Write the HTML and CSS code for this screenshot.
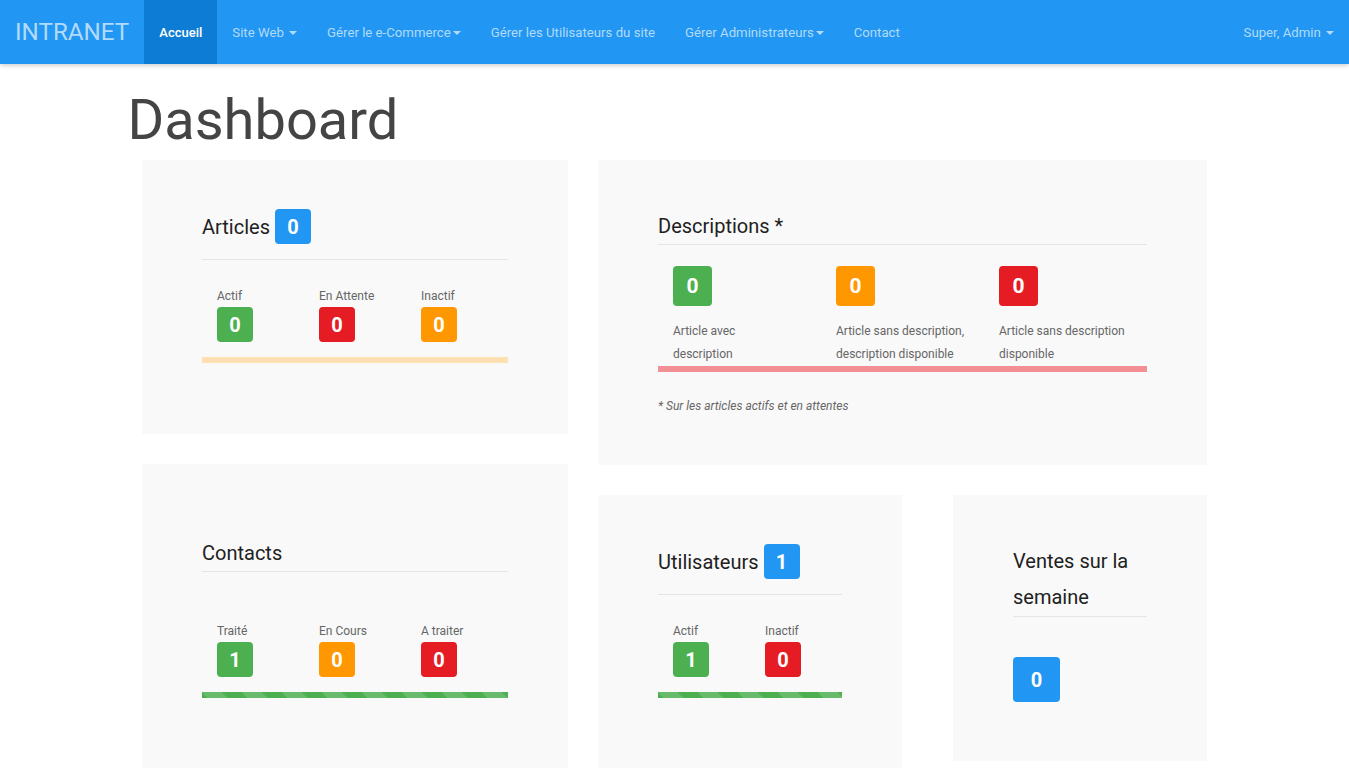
FILE: index.html
```html
<!DOCTYPE html>
<html lang="fr">
<head>
<meta charset="utf-8">
<title>Dashboard - INTRANET</title>
<link rel="stylesheet" href="styles.css">
</head>
<body>
<nav class="navbar">
  <div class="brand">INTRANET</div>
  <ul class="nav">
    <li class="active"><a href="#">Accueil</a></li>
    <li><a href="#">Site Web <span class="caret"></span></a></li>
    <li><a href="#">Gérer le e-Commerce<span class="caret"></span></a></li>
    <li><a href="#">Gérer les Utilisateurs du site</a></li>
    <li><a href="#">Gérer Administrateurs<span class="caret"></span></a></li>
    <li><a href="#">Contact</a></li>
  </ul>
  <ul class="nav nav-right">
    <li><a href="#">Super, Admin <span class="caret"></span></a></li>
  </ul>
</nav>

<main class="container">
  <h1 class="page-title">Dashboard</h1>
  <div class="grid">
    <div class="col col-left">
      <section class="card card-articles">
        <div class="head head-badge">
          <h3 class="title">Articles</h3>
          <span class="badge badge-blue">0</span>
        </div>
        <div class="stats stats-3 stats-articles">
          <div class="stat"><div class="label">Actif</div><span class="badge badge-green">0</span></div>
          <div class="stat"><div class="label">En Attente</div><span class="badge badge-red">0</span></div>
          <div class="stat"><div class="label">Inactif</div><span class="badge badge-orange">0</span></div>
        </div>
        <div class="bar bar-peach"></div>
      </section>

      <section class="card card-contacts">
        <div class="head head-text">
          <h3 class="title">Contacts</h3>
        </div>
        <div class="stats stats-3 stats-low">
          <div class="stat"><div class="label">Traité</div><span class="badge badge-green">1</span></div>
          <div class="stat"><div class="label">En Cours</div><span class="badge badge-orange">0</span></div>
          <div class="stat"><div class="label">A traiter</div><span class="badge badge-red">0</span></div>
        </div>
        <div class="bar bar-striped"></div>
      </section>
    </div>

    <div class="col col-right">
      <section class="card card-desc">
        <div class="head head-text">
          <h3 class="title">Descriptions *</h3>
        </div>
        <div class="stats stats-3 stats-desc">
          <div class="stat"><span class="badge badge-lg badge-green">0</span><div class="label label-desc">Article avec<br>description</div></div>
          <div class="stat"><span class="badge badge-lg badge-orange">0</span><div class="label label-desc">Article sans description,<br>description disponible</div></div>
          <div class="stat"><span class="badge badge-lg badge-red">0</span><div class="label label-desc">Article sans description<br>disponible</div></div>
        </div>
        <div class="bar bar-pink bar-flush"></div>
        <p class="note">* Sur les articles actifs et en attentes</p>
      </section>

      <div class="pair">
        <section class="card card-users">
          <div class="head head-badge">
            <h3 class="title">Utilisateurs</h3>
            <span class="badge badge-blue">1</span>
          </div>
          <div class="stats stats-2 stats-low-users">
            <div class="stat"><div class="label">Actif</div><span class="badge badge-green">1</span></div>
            <div class="stat"><div class="label">Inactif</div><span class="badge badge-red">0</span></div>
          </div>
          <div class="bar bar-striped"></div>
        </section>

        <section class="card card-ventes">
          <div class="head head-tall">
            <h3 class="title title-tall">Ventes sur la semaine</h3>
          </div>
          <span class="badge badge-xl badge-blue">0</span>
        </section>
      </div>
    </div>
  </div>
</main>
</body>
</html>
```

FILE: styles.css
```css
* { box-sizing: border-box; }

body {
  margin: 0;
  font-family: Roboto, "Liberation Sans", Arial, sans-serif;
  color: #666;
  background: #fff;
}

/* ---------- navbar ---------- */
.navbar {
  display: flex;
  height: 64px;
  background: #2196f3;
  box-shadow: 0 1px 6px rgba(0, 0, 0, 0.12), 0 1px 4px rgba(0, 0, 0, 0.12);
  position: relative;
  z-index: 1;
}

.brand {
  padding: 0 15px;
  font-size: 24.2px;
  line-height: 64px;
  color: #b2dbfb;
}

.nav {
  display: flex;
  list-style: none;
  margin: 0;
  padding: 0;
}

.nav a {
  display: block;
  padding: 21.5px 15px;
  line-height: 21px;
  font-size: 13.2px;
  color: #b2dbfb;
  text-decoration: none;
}

.nav .active a {
  background: #0c7cd5;
  color: #fff;
  font-weight: 500;
  font-size: 13px;
}

.nav-right { margin-left: auto; }

.caret {
  display: inline-block;
  width: 0;
  height: 0;
  margin-left: 2px;
  vertical-align: middle;
  border-top: 4px solid;
  border-left: 4px solid transparent;
  border-right: 4px solid transparent;
}

/* ---------- page ---------- */
.container {
  width: 1140px;
  margin: 0 auto;
}

.page-title {
  margin: 25px 0 9px;
  padding-left: 23px;
  font-size: 56px;
  line-height: 62px;
  font-weight: 400;
  color: #444;
}

.grid {
  display: flex;
  gap: 30px;
  margin-left: 37.5px;
  align-items: flex-start;
}

.col {
  display: flex;
  flex-direction: column;
  gap: 30px;
}

.col-left { width: 426px; }
.col-right { width: 609px; }

.pair {
  display: flex;
  gap: 51px;
  align-items: flex-start;
}

.card {
  background: #f9f9f9;
  padding: 0 60px;
}

.card-articles { height: 274px; padding-top: 49px; }
.card-contacts { height: 330px; padding-top: 75px; }
.card-desc { height: 305px; padding-top: 52px; }
.card-users { width: 304px; height: 300px; padding-top: 49px; }
.card-ventes { width: 254px; height: 266px; padding-top: 49px; }

/* ---------- headers ---------- */
.head { border-bottom: 1px solid #e5e5e5; }

.head-badge {
  display: flex;
  align-items: center;
  gap: 5px;
  padding-bottom: 15px;
}

.head-text { padding-bottom: 4px; }
.head-tall { padding-bottom: 1px; }

.title {
  margin: 0;
  font-size: 20px;
  font-weight: 400;
  line-height: 28px;
  color: #212121;
}

.title-tall { line-height: 35.5px; }

/* ---------- badges ---------- */
.badge {
  display: inline-flex;
  align-items: center;
  justify-content: center;
  width: 36px;
  height: 35px;
  border-radius: 4px;
  color: #fff;
  font-size: 20px;
  font-weight: 700;
}

.badge-lg { width: 39px; height: 40px; font-size: 21px; }
.badge-xl { width: 47px; height: 45px; margin-top: 40px; }

.badge-blue { background: #2196f3; }
.badge-green { background: #4caf50; }
.badge-red { background: #e51c23; }
.badge-orange { background: #ff9800; }

/* ---------- stats ---------- */
.stats { display: grid; }
.stats-3 { grid-template-columns: repeat(3, 1fr); }
.stats-2 { grid-template-columns: repeat(2, 1fr); }

.stats-articles { margin-top: 28px; }
.stats-low { margin-top: 51px; }
.stats-low-users { margin-top: 28px; }
.stats-desc { margin-top: 21px; }

.stat { padding-left: 15px; }

.label {
  font-size: 12px;
  line-height: 17px;
  margin-bottom: 2px;
  color: #666;
  white-space: nowrap;
}

.label-desc {
  line-height: 23px;
  margin: 14px 0 0;
}

/* ---------- bars ---------- */
.bar { height: 6px; margin-top: 15px; }
.bar-flush { margin-top: 0; }

.bar-peach { background: #ffe0b2; }
.bar-pink { background: #f28f94; }

.bar-striped {
  background-color: #4caf50;
  background-image: linear-gradient(45deg,
    rgba(255, 255, 255, 0.15) 25%, transparent 25%,
    transparent 50%, rgba(255, 255, 255, 0.15) 50%,
    rgba(255, 255, 255, 0.15) 75%, transparent 75%, transparent);
  background-size: 40px 40px;
}

.note {
  margin: 26px 0 0;
  font-size: 12px;
  line-height: 17px;
  font-style: italic;
  color: #666;
}
```
